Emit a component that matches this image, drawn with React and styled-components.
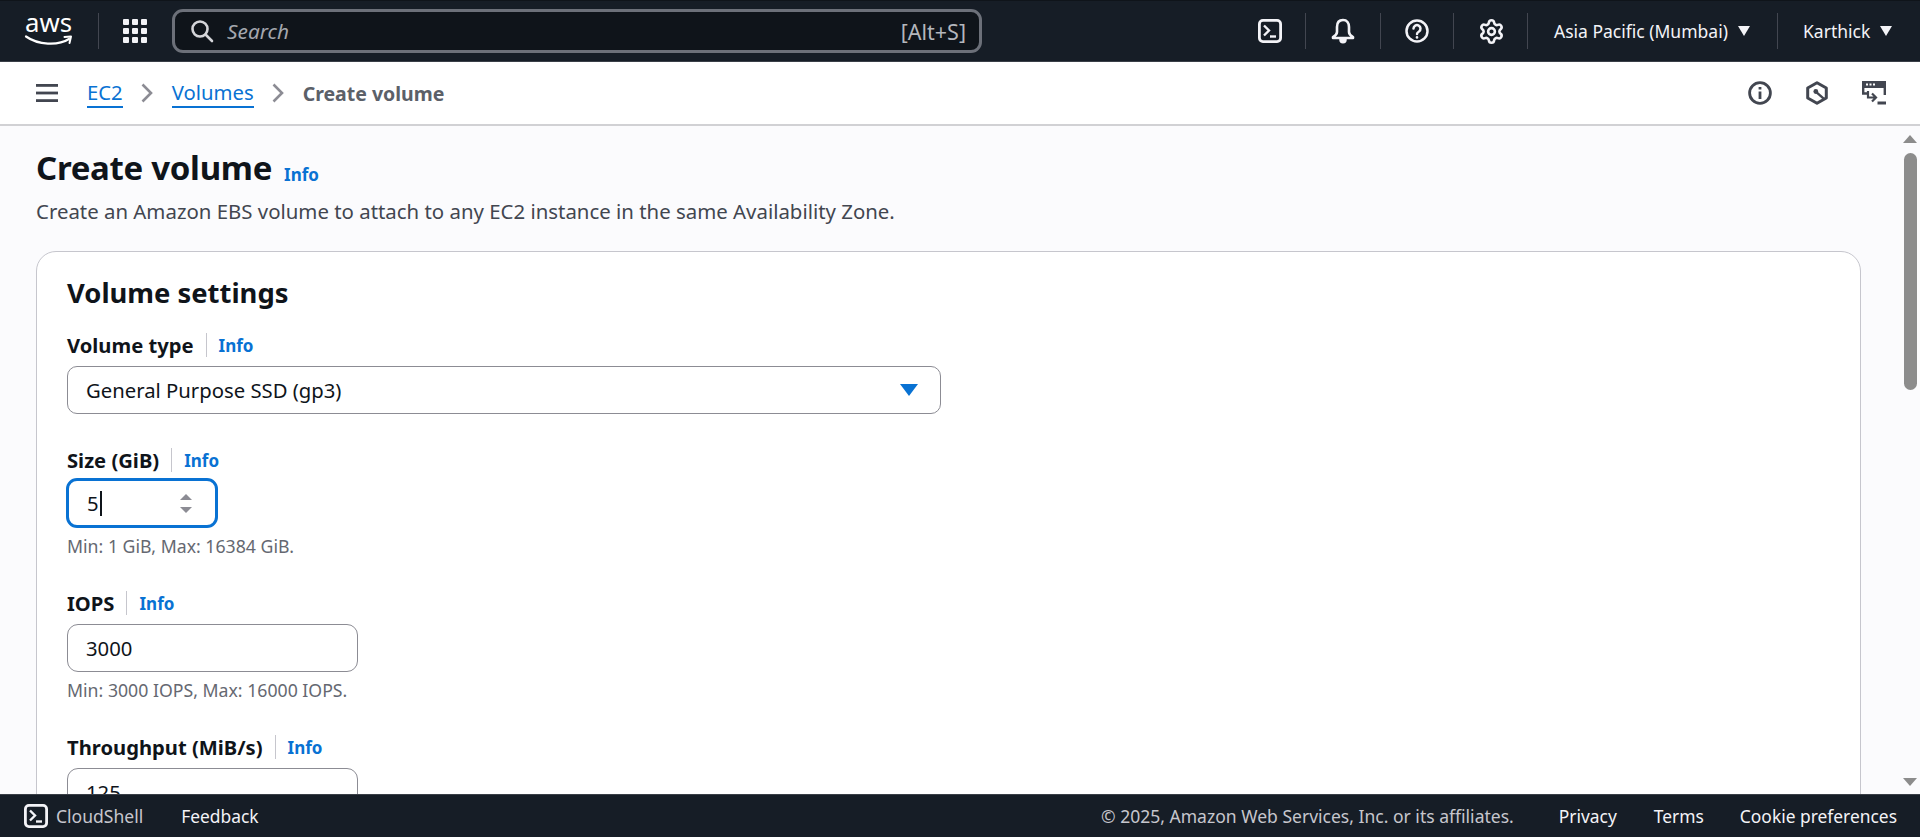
import styled, { createGlobalStyle } from "styled-components";
import { Settings } from "lucide-react";

const GlobalStyle = createGlobalStyle`
  html, body { margin: 0; padding: 0; height: 100%; overflow: hidden; }
  body { font-family: "Noto Sans", "Open Sans", sans-serif; color: #0f141a; background: #fff; }
  * { box-sizing: border-box; }
`;

const Page = styled.div`
  display: flex;
  flex-direction: column;
  height: 837px;
  width: 1920px;
  overflow: hidden;
`;

const TopBar = styled.header`
  flex: 0 0 62px;
  display: flex;
  align-items: center;
  background: #161d26;
  border-top: 1px solid #0f141a;
  border-bottom: 1px solid #3a3f47;
  color: #f3f3f7;
`;

const LogoBox = styled.div`
  display: flex;
  align-items: center;
  width: 99px;
  padding-left: 25px;
  height: 36px;
  border-right: 1px solid #424650;
`;

const GridBox = styled.div`
  display: flex;
  margin-left: 24px;
  margin-right: 25px;
`;

const SearchBox = styled.div`
  width: 810px;
  height: 44px;
  display: flex;
  align-items: center;
  padding: 0 13px 0 15px;
  background: #0f141a;
  border: 3px solid #6c7079;
  border-radius: 11px;
`;

const SearchHint = styled.span`
  flex: 1;
  margin-left: 13px;
  font-size: 20.8px;
  font-style: italic;
  color: #a4a7ae;
`;

const SearchKey = styled.span`
  font-size: 21.5px;
  color: #b4b7bd;
`;

const TopActions = styled.div`
  margin-left: auto;
  display: flex;
  align-items: center;
  height: 36px;
`;

const IconCell = styled.div`
  display: flex;
  align-items: center;
  justify-content: center;
  height: 100%;
  width: ${(p) => p.$w}px;
  padding-left: ${(p) => p.$shift || 0}px;
  border-right: 1px solid #424650;
`;

const MenuCell = styled.div`
  display: flex;
  align-items: center;
  height: 100%;
  width: ${(p) => p.$w}px;
  padding-left: ${(p) => p.$pad}px;
  gap: 10px;
  font-size: 17.5px;
  white-space: nowrap;
  ${(p) => p.$divided && "border-right: 1px solid #424650;"}
`;

const Caret = styled.span`
  width: 0;
  height: 0;
  border-left: 6px solid transparent;
  border-right: 6px solid transparent;
  border-top: 10px solid #f3f3f7;
`;

const CrumbBar = styled.nav`
  flex: 0 0 64px;
  display: flex;
  align-items: center;
  background: #fff;
  border-bottom: 2px solid #d1d1d4;
  padding: 0 34px 0 36px;
`;

const Crumbs = styled.div`
  display: flex;
  align-items: center;
  margin-left: 29px;
  gap: 18.5px;
  font-size: 20.3px;
`;

const CrumbLink = styled.a`
  color: #0972d3;
  text-decoration: none;
  border-bottom: 2px solid #0972d3;
  line-height: 27px;
`;

const CrumbCurrent = styled.span`
  color: #5b6068;
  font-weight: 700;
  font-size: 19.5px;
`;

const CrumbIcons = styled.div`
  margin-left: auto;
  display: flex;
  align-items: center;
  gap: 34px;
`;

const Body = styled.div`
  flex: 1;
  min-height: 0;
  display: flex;
  background: #fbfbfd;
`;

const Content = styled.main`
  flex: 1;
  min-width: 0;
  overflow: hidden;
  padding: 18px 43px 0 36px;
`;

const TitleRow = styled.div`
  display: flex;
  align-items: baseline;
  gap: 12px;
`;

const Title = styled.h1`
  margin: 0;
  font-size: 33px;
  line-height: 48px;
  font-weight: 700;
  letter-spacing: -0.3px;
`;

const Info = styled.a`
  color: #0972d3;
  font-weight: 700;
  font-size: 17px;
  ${(p) => p.$low && "position: relative; top: 1px;"}
`;

const Description = styled.p`
  margin: 4px 0 0;
  font-size: 20.4px;
  line-height: 30px;
  color: #424650;
`;

const Card = styled.section`
  margin-top: 25px;
  margin-right: -1px;
  background: #fff;
  border: 1px solid #c6c6cd;
  border-radius: 20px;
  padding: 22px 30px 60px;
  height: 700px;
`;

const CardTitle = styled.h2`
  margin: 0;
  font-size: 27.4px;
  line-height: 38px;
  font-weight: 700;
`;

const Field = styled.div`
  margin-top: ${(p) => p.$top}px;
`;

const LabelRow = styled.div`
  display: flex;
  align-items: center;
  height: 24px;
`;

const Label = styled.label`
  font-size: 20.2px;
  font-weight: 700;
  padding-right: 12px;
  height: 24px;
  line-height: 24px;
  border-right: 1px solid #c6c6cd;
  margin-right: 12px;
`;

const Select = styled.div`
  margin-top: 9px;
  width: 874px;
  height: 48px;
  display: flex;
  align-items: center;
  justify-content: space-between;
  padding: 0 22px 0 18px;
  border: 1px solid #8c8c94;
  border-radius: 10px;
  font-size: 20.3px;
  background: #fff;
`;

const SelectCaret = styled.span`
  width: 0;
  height: 0;
  border-left: 9px solid transparent;
  border-right: 9px solid transparent;
  border-top: 12px solid #0972d3;
`;

const InputBox = styled.div`
  margin-top: ${(p) => (p.$focused ? 6 : 9)}px;
  margin-left: ${(p) => (p.$focused ? -1 : 0)}px;
  width: ${(p) => (p.$focused ? 152 : 291)}px;
  height: ${(p) => (p.$focused ? 50 : 48)}px;
  display: flex;
  align-items: center;
  padding-left: 18px;
  border: ${(p) => (p.$focused ? "3px solid #0972d3" : "1px solid #8c8c94")};
  border-radius: 11px;
  font-size: 20.3px;
  background: #fff;
`;

const Cursor = styled.span`
  display: inline-block;
  width: 2px;
  height: 25px;
  margin-left: 1px;
  background: #0f141a;
`;

const Spinner = styled.div`
  margin-left: 78px;
  display: flex;
  flex-direction: column;
  gap: 7px;
`;

const SpinArrow = styled.span`
  width: 0;
  height: 0;
  border-left: 6px solid transparent;
  border-right: 6px solid transparent;
  ${(p) => (p.$down ? "border-top: 6px solid #8c8c94;" : "border-bottom: 6px solid #8c8c94;")}
`;

const Hint = styled.div`
  margin-top: 7px;
  font-size: 17.7px;
  line-height: 22px;
  color: #656871;
`;

const ScrollBar = styled.div`
  flex: 0 0 17px;
  display: flex;
  flex-direction: column;
  align-items: center;
  padding: 9px 3px 8px 0;
  background: #fbfbfd;
`;

const ScrollArrow = styled.span`
  width: 0;
  height: 0;
  border-left: 7.5px solid transparent;
  border-right: 7.5px solid transparent;
  ${(p) =>
    p.$down
      ? "border-top: 8px solid #8c8c8c; margin-top: auto;"
      : "border-bottom: 8px solid #8c8c8c;"}
`;

const ScrollThumb = styled.div`
  margin-top: 10px;
  width: 13px;
  height: 237px;
  border-radius: 7px;
  background: #8c8c8c;
`;

const Footer = styled.footer`
  flex: 0 0 43px;
  display: flex;
  align-items: center;
  padding: 0 23px 0 24px;
  background: #161d26;
  border-top: 1px solid #3a3f47;
  color: #f3f3f7;
  font-size: 17.4px;
`;

const FooterItem = styled.span`
  margin-left: ${(p) => p.$left || 0}px;
  white-space: nowrap;
  ${(p) => p.$muted && "color: #c6c6cd; font-size: 17.55px;"}
  ${(p) => p.$push && "margin-left: auto;"}
`;

const AwsLogo = () => (
  <svg width="48" height="30" viewBox="0 0 48 30" fill="none" overflow="visible">
    <text
      x="0"
      y="16"
      fontFamily="'Noto Sans', sans-serif"
      fontSize="26"
      fill="#fff"
      textLength="47"
      lengthAdjust="spacingAndGlyphs"
    >
      aws
    </text>
    <path d="M1 20.5C13 29 33 30 44 23" stroke="#fff" strokeWidth="2.2" strokeLinecap="round" />
    <path d="M39.5 21L46 20.5L44.5 27" stroke="#fff" strokeWidth="2" strokeLinecap="round" strokeLinejoin="round" />
  </svg>
);

const GridIcon = () => (
  <svg width="24" height="24" viewBox="0 0 24 24" fill="#f3f3f7">
    {[0, 9, 18].map((y) =>
      [0, 9, 18].map((x) => <rect key={`${x}-${y}`} x={x} y={y} width="6" height="6" rx="1" />)
    )}
  </svg>
);

const SearchIcon = () => (
  <svg width="24" height="24" viewBox="0 0 24 24" fill="none" stroke="#d4d5d9" strokeWidth="2.6" strokeLinecap="round">
    <circle cx="10" cy="10" r="7.5" />
    <path d="M15.5 15.5L22 22" />
  </svg>
);

const ShellIcon = () => (
  <svg width="24" height="24" viewBox="0 0 24 24" fill="none" stroke="#f3f3f7" strokeWidth="2.8">
    <rect x="1.4" y="1.4" width="21.2" height="21.2" rx="3.5" />
    <path d="M6 6.5l5 5-5 5" strokeWidth="2.4" />
    <path d="M12 17.5h6" strokeWidth="2.4" />
  </svg>
);

const BellIcon = () => (
  <svg width="24" height="26" viewBox="0 0 24 26" fill="none" stroke="#f3f3f7" strokeWidth="2.6" strokeLinejoin="round">
    <path d="M12 2c-4 0-6 3-6 7v5c0 2-1.5 3.5-4 5v1h20v-1c-2.5-1.5-4-3-4-5V9c0-4-2-7-6-7z" />
    <path d="M9.5 21.5c0 1.8 1 2.8 2.5 2.8s2.5-1 2.5-2.8z" fill="#f3f3f7" />
  </svg>
);

const HelpIcon = () => (
  <svg width="24" height="24" viewBox="0 0 24 24" fill="none" stroke="#f3f3f7" strokeWidth="2.5" strokeLinecap="round">
    <circle cx="12" cy="12" r="10.5" />
    <path d="M8.5 9.5a3.5 3.5 0 1 1 5.5 3c-1.3.8-2 1.4-2 2.5" />
    <path d="M12 18.2v.2" strokeWidth="2.6" />
  </svg>
);

const Hamburger = () => (
  <svg width="22" height="18" viewBox="0 0 22 18" fill="#424650">
    <rect width="22" height="2.8" />
    <rect y="7.6" width="22" height="2.8" />
    <rect y="15.2" width="22" height="2.8" />
  </svg>
);

const Chevron = () => (
  <svg width="12" height="20" viewBox="0 0 12 20" fill="none" stroke="#8c8c94" strokeWidth="2.6">
    <path d="M1.5 1.5L10 10l-8.5 8.5" />
  </svg>
);

const InfoCircle = () => (
  <svg width="24" height="24" viewBox="0 0 24 24" fill="none" stroke="#424650" strokeWidth="2.8">
    <circle cx="12" cy="12" r="10.4" />
    <path d="M12 10.5v7.5M12 6v2.6" />
  </svg>
);

const HexIcon = () => (
  <svg width="22" height="24" viewBox="0 0 22 24" fill="none" stroke="#424650" strokeWidth="3" strokeLinejoin="round">
    <path d="M11 1.7L20.3 7v10L11 22.3 1.7 17V7z" />
    <circle cx="9.8" cy="10.5" r="2.4" fill="#424650" stroke="none" />
    <path d="M10 10.8l8 7" strokeWidth="2.4" />
  </svg>
);

const TerminalScreen = () => (
  <svg width="24" height="24" viewBox="0 0 24 24" fill="none">
    <path d="M22.8 1v13M1.2 1v11.5h5" stroke="#424650" strokeWidth="2.4" />
    <path d="M0 0h24v7H0z" fill="#424650" />
    <path d="M4 3.5h2M7.5 3.5h2M11 3.5h2" stroke="#fff" strokeWidth="2" />
    <path d="M6 10v6.5h7M10 12.5l4 4-4 4" stroke="#424650" strokeWidth="2.2" />
    <path d="M15.5 22h8.5" stroke="#424650" strokeWidth="3" />
  </svg>
);

const FieldLabel = ({ children }) => (
  <LabelRow>
    <Label>{children}</Label>
    <Info>Info</Info>
  </LabelRow>
);

export default function App() {
  return (
    <Page>
      <GlobalStyle />
      <TopBar>
        <LogoBox>
          <AwsLogo />
        </LogoBox>
        <GridBox>
          <GridIcon />
        </GridBox>
        <SearchBox>
          <SearchIcon />
          <SearchHint>Search</SearchHint>
          <SearchKey>[Alt+S]</SearchKey>
        </SearchBox>
        <TopActions>
          <IconCell $w={76} $shift={4}>
            <ShellIcon />
          </IconCell>
          <IconCell $w={75}>
            <BellIcon />
          </IconCell>
          <IconCell $w={73}>
            <HelpIcon />
          </IconCell>
          <IconCell $w={74} $shift={2}>
            <Settings size={27} strokeWidth={2.3} />
          </IconCell>
          <MenuCell $w={250} $pad={26} $divided>
            Asia Pacific (Mumbai) <Caret />
          </MenuCell>
          <MenuCell $w={142} $pad={25}>
            Karthick <Caret />
          </MenuCell>
        </TopActions>
      </TopBar>

      <CrumbBar>
        <Hamburger />
        <Crumbs>
          <CrumbLink>EC2</CrumbLink>
          <Chevron />
          <CrumbLink>Volumes</CrumbLink>
          <Chevron />
          <CrumbCurrent>Create volume</CrumbCurrent>
        </Crumbs>
        <CrumbIcons>
          <InfoCircle />
          <HexIcon />
          <TerminalScreen />
        </CrumbIcons>
      </CrumbBar>

      <Body>
        <Content>
          <TitleRow>
            <Title>Create volume</Title>
            <Info $low>Info</Info>
          </TitleRow>
          <Description>
            Create an Amazon EBS volume to attach to any EC2 instance in the same Availability Zone.
          </Description>
          <Card>
            <CardTitle>Volume settings</CardTitle>
            <Field $top={21}>
              <FieldLabel>Volume type</FieldLabel>
              <Select>
                General Purpose SSD (gp3)
                <SelectCaret />
              </Select>
            </Field>
            <Field $top={34}>
              <FieldLabel>Size (GiB)</FieldLabel>
              <InputBox $focused>
                5
                <Cursor />
                <Spinner>
                  <SpinArrow />
                  <SpinArrow $down />
                </Spinner>
              </InputBox>
              <Hint>Min: 1 GiB, Max: 16384 GiB.</Hint>
            </Field>
            <Field $top={34}>
              <FieldLabel>IOPS</FieldLabel>
              <InputBox>3000</InputBox>
              <Hint>Min: 3000 IOPS, Max: 16000 IOPS.</Hint>
            </Field>
            <Field $top={34}>
              <FieldLabel>Throughput (MiB/s)</FieldLabel>
              <InputBox>125</InputBox>
            </Field>
          </Card>
        </Content>
        <ScrollBar>
          <ScrollArrow />
          <ScrollThumb />
          <ScrollArrow $down />
        </ScrollBar>
      </Body>

      <Footer>
        <ShellIcon />
        <FooterItem $left={8} $muted>CloudShell</FooterItem>
        <FooterItem $left={38}>Feedback</FooterItem>
        <FooterItem $push $muted>© 2025, Amazon Web Services, Inc. or its affiliates.</FooterItem>
        <FooterItem $left={45}>Privacy</FooterItem>
        <FooterItem $left={37}>Terms</FooterItem>
        <FooterItem $left={36}>Cookie preferences</FooterItem>
      </Footer>
    </Page>
  );
}
